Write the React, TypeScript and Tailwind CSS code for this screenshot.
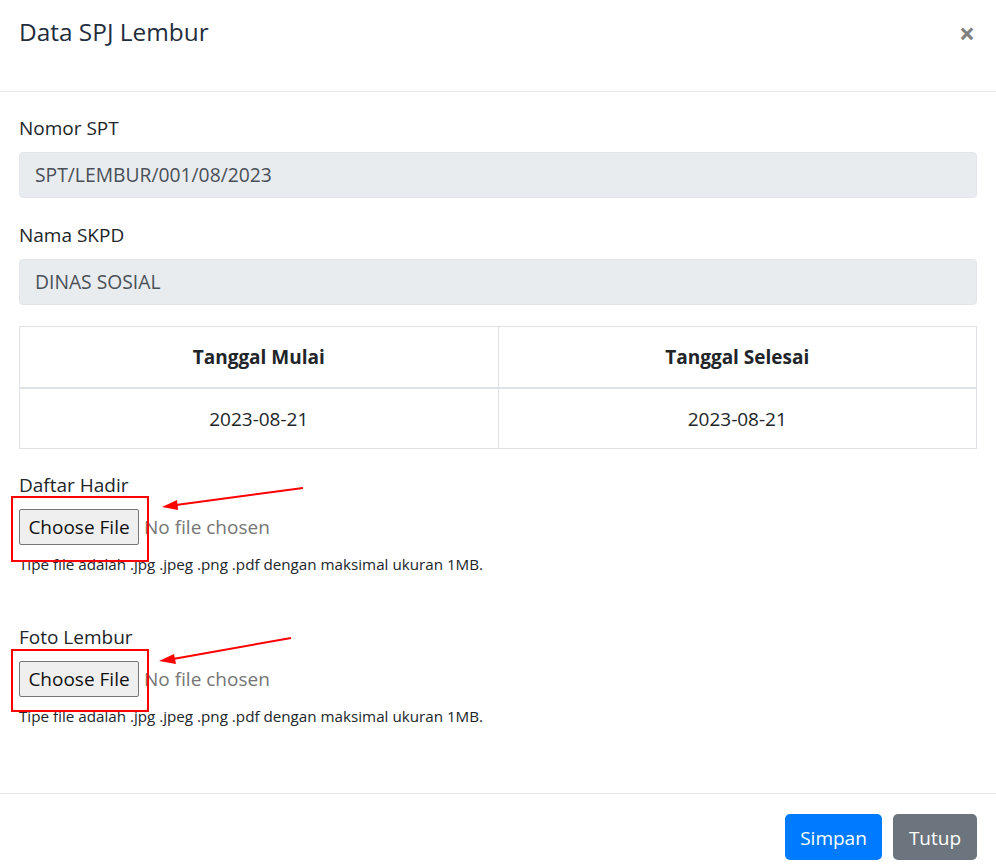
import React from "react";

const font = "font-['Open_Sans','Noto_Sans',sans-serif]";

function ReadonlyField({ label, value, top }: { label: string; value: string; top: string }) {
  return (
    <div className={top}>
      <label className="block text-[19px] leading-[30px] mb-[9px] text-[#212529]">{label}</label>
      <div className="h-[46px] rounded-[4px] bg-[#e9ecef] border border-[#e2e6ea] pl-[15px] flex items-center text-[19.3px] text-[#495057]">
        {value}
      </div>
    </div>
  );
}

function FileField({ label, top }: { label: string; top: string }) {
  return (
    <div className={top}>
      <label className="block text-[19px] leading-[30px] mb-[9px] text-[#212529]">{label}</label>
      <div className="flex items-center h-[36px]">
        <button className="h-[36px] w-[120px] bg-[#efefef] border border-[#767676] rounded-[2px] text-[19px] text-[#111] flex items-center justify-center pt-[1px]">
          Choose File
        </button>
        <span className="ml-[5px] pt-[1px] text-[19px] text-[#767676]">No file chosen</span>
      </div>
      <p className="mt-[9px] text-[15.2px] leading-[21px] text-[#212529]">
        Tipe file adalah .jpg .jpeg .png .pdf dengan maksimal ukuran 1MB.
      </p>
    </div>
  );
}

export default function App() {
  return (
    <div className={`relative w-[996px] h-[868px] bg-white overflow-hidden ${font}`}>
      <div className="h-[92px] border-b border-[#e5e8eb] px-[19px] pt-[13px] flex justify-between items-start">
        <h5 className="text-[24.4px] leading-[38px] text-[#1f2d3d]">Data SPJ Lembur</h5>
        <button className="mr-[2px] mt-[1px] text-[28px] leading-[38px] font-bold text-[#808080]">×</button>
      </div>

      <div className="h-[701px] px-[19px] pt-[21px]">
        <ReadonlyField label="Nomor SPT" value="SPT/LEMBUR/001/08/2023" top="" />
        <ReadonlyField label="Nama SKPD" value="DINAS SOSIAL" top="mt-[22px]" />

        <table className="mt-[21px] w-full border-collapse border border-[#dee2e6] text-[#212529] text-[19px]">
          <thead>
            <tr>
              <th className="h-[61px] w-1/2 border border-[#dee2e6] border-b-2 font-bold text-center">Tanggal Mulai</th>
              <th className="h-[61px] w-1/2 border border-[#dee2e6] border-b-2 font-bold text-center">Tanggal Selesai</th>
            </tr>
          </thead>
          <tbody>
            <tr>
              <td className="h-[61px] border border-[#dee2e6] text-center pt-[2px]">2023-08-21</td>
              <td className="h-[61px] border border-[#dee2e6] text-center pt-[2px]">2023-08-21</td>
            </tr>
          </tbody>
        </table>

        <FileField label="Daftar Hadir" top="mt-[21px]" />
        <FileField label="Foto Lembur" top="mt-[47px]" />
      </div>

      <div className="border-t border-[#e5e8eb] pt-[20px] px-[19px] flex justify-end gap-[11px]">
        <button className="h-[46px] w-[97px] rounded-[5px] bg-[#007bff] text-white text-[19px] pt-[3px]">Simpan</button>
        <button className="h-[46px] w-[84px] rounded-[5px] bg-[#6c757d] text-white text-[19px] pt-[3px]">Tutup</button>
      </div>

      {/* annotations */}
      <svg className="absolute left-0 top-0 pointer-events-none" width="996" height="868">
        <rect x="12" y="497" width="136" height="64" fill="none" stroke="#ff0000" strokeWidth="2" />
        <rect x="12" y="650" width="136" height="61" fill="none" stroke="#ff0000" strokeWidth="2" />
        <line x1="303" y1="488" x2="176" y2="505" stroke="#ff0000" strokeWidth="2" />
        <polygon points="162,507 177,500 178,510" fill="#ff0000" />
        <line x1="291" y1="638" x2="173" y2="659" stroke="#ff0000" strokeWidth="2" />
        <polygon points="159,661 174,654 176,664" fill="#ff0000" />
      </svg>
    </div>
  );
}
